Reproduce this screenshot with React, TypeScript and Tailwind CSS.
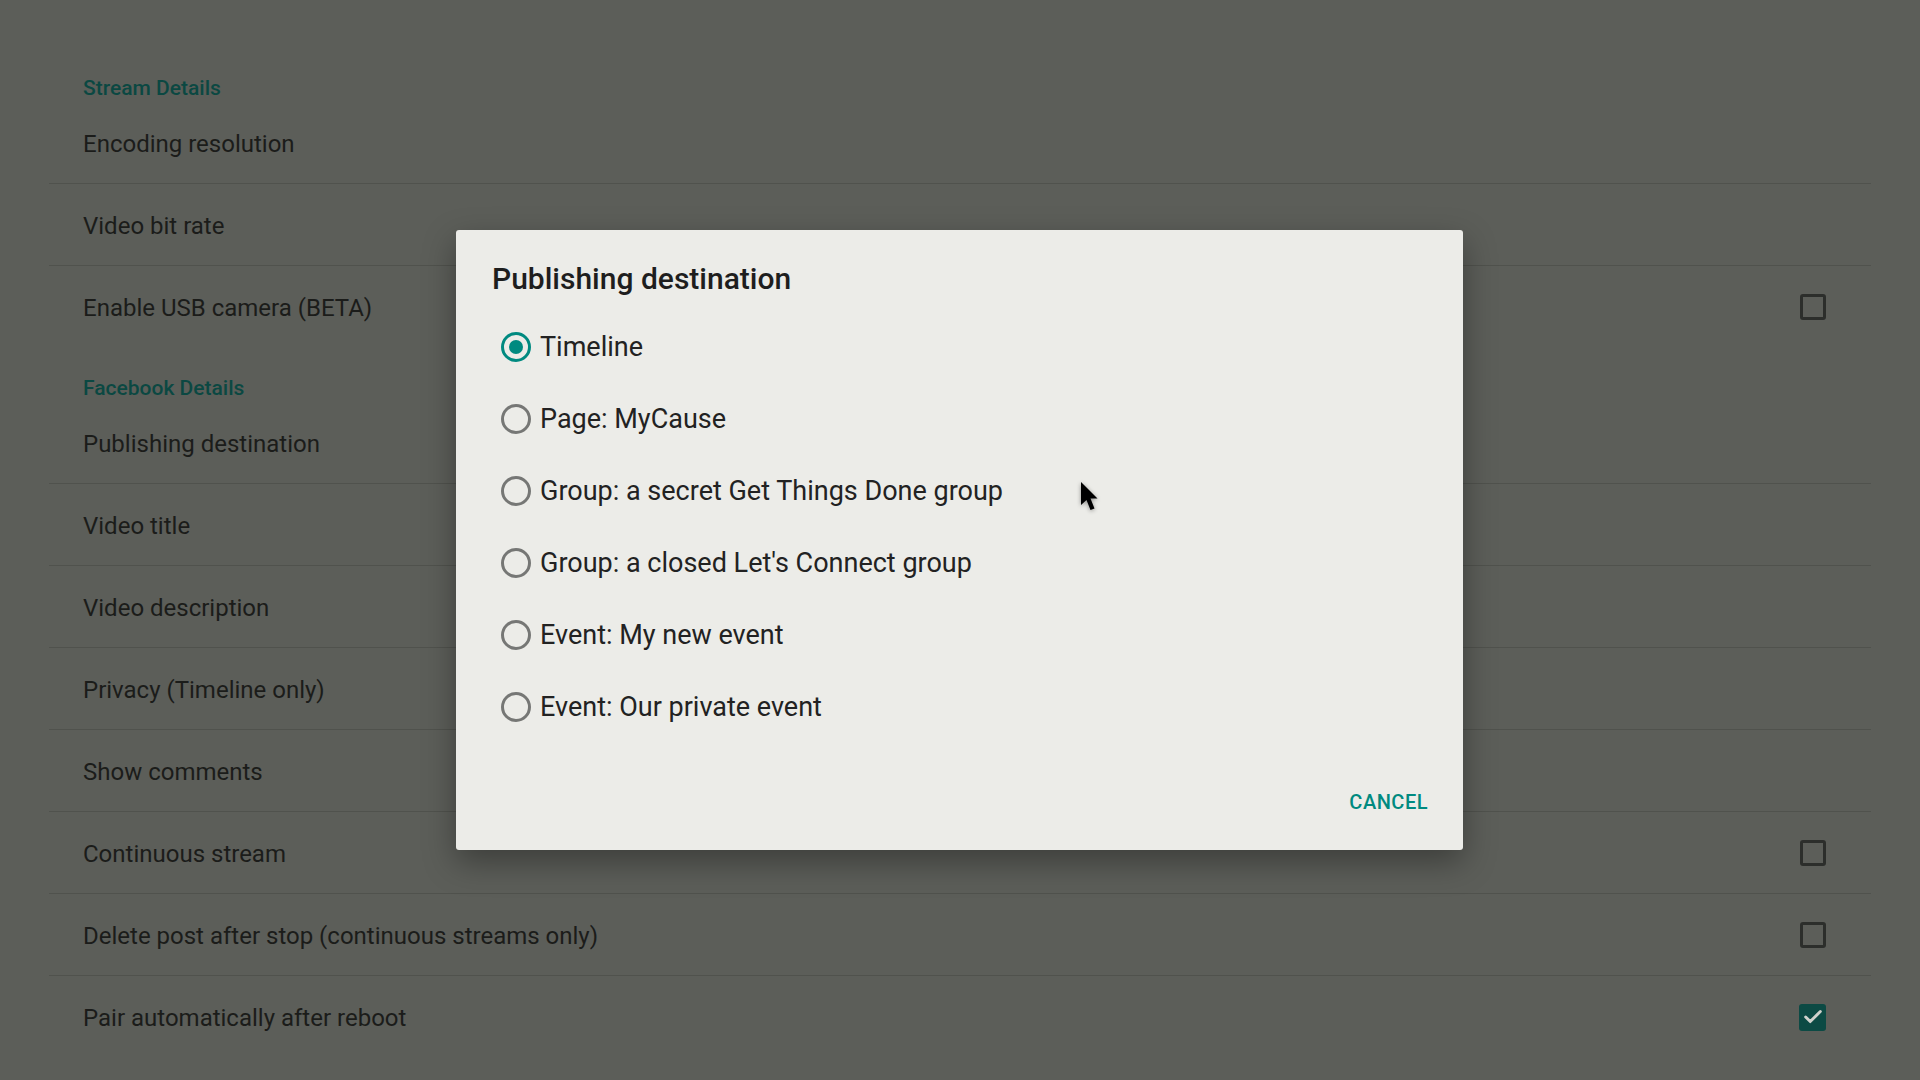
import { Check } from 'lucide-react';

type Row = { kind: 'header'; title: string } | { kind: 'item'; title: string; check?: boolean; checked?: boolean; divider?: boolean };

const rows: Row[] = [
  { kind: 'header', title: 'Stream Details' },
  { kind: 'item', title: 'Encoding resolution', divider: true },
  { kind: 'item', title: 'Video bit rate', divider: true },
  { kind: 'item', title: 'Enable USB camera (BETA)', check: true },
  { kind: 'header', title: 'Facebook Details' },
  { kind: 'item', title: 'Publishing destination', divider: true },
  { kind: 'item', title: 'Video title', divider: true },
  { kind: 'item', title: 'Video description', divider: true },
  { kind: 'item', title: 'Privacy (Timeline only)', divider: true },
  { kind: 'item', title: 'Show comments', divider: true },
  { kind: 'item', title: 'Continuous stream', check: true, divider: true },
  { kind: 'item', title: 'Delete post after stop (continuous streams only)', check: true, divider: true },
  { kind: 'item', title: 'Pair automatically after reboot', check: true, checked: true },
];

const destinations = [
  'Timeline',
  'Page: MyCause',
  'Group: a secret Get Things Done group',
  "Group: a closed Let's Connect group",
  'Event: My new event',
  'Event: Our private event',
];

function Checkbox({ checked }: { checked?: boolean }) {
  if (checked) {
    return (
      <div className="flex h-[27px] w-[27px] items-center justify-center rounded-[3px] bg-[#0c4a44]">
        <Check className="h-[22px] w-[22px] text-[#cfd1cc]" strokeWidth={3.2} />
      </div>
    );
  }
  return <div className="h-[26px] w-[26px] rounded-[3px] border-[3px] border-[#2c2e2b]" />;
}

function Radio({ selected }: { selected?: boolean }) {
  if (selected) {
    return (
      <div className="flex h-[30px] w-[30px] items-center justify-center rounded-full border-[3px] border-[#008a80]">
        <div className="h-[14px] w-[14px] rounded-full bg-[#008a80]" />
      </div>
    );
  }
  return <div className="h-[30px] w-[30px] rounded-full border-[3px] border-[#767775]" />;
}

export default function App() {
  return (
    <div className="relative h-[1080px] w-[1920px] overflow-hidden bg-[#5c5e59] font-['Roboto','Liberation_Sans',sans-serif]">
      <div className="px-[49px] pt-[48px]">
        {rows.map((row) =>
          row.kind === 'header' ? (
            <div key={row.title} className="h-[54px] pl-[34px] pt-[28px] text-[21px] leading-[24px] font-medium text-[#0b4842]">
              {row.title}
            </div>
          ) : (
            <div
              key={row.title}
              className={`flex h-[82px] items-center justify-between pl-[34px] pr-[45px] ${row.divider ? 'border-b border-[#50524d]' : ''}`}
            >
              <span className="pt-[2px] text-[24px] text-[#1b1c1a]">{row.title}</span>
              {row.check && <Checkbox checked={row.checked} />}
            </div>
          )
        )}
      </div>

      {/* Dialog */}
      <div className="absolute left-[456px] top-[230px] flex h-[620px] w-[1007px] flex-col rounded-[3px] bg-[#ecece8] shadow-[0_12px_32px_rgba(0,0,0,0.35)]">
        <h2 className="pl-[36px] pt-[31px] text-[30px] leading-[36px] font-medium text-[#1e1e1e]">Publishing destination</h2>
        <div className="mt-[14px] flex flex-col pl-[45px]">
          {destinations.map((d, i) => (
            <div key={d} className="flex h-[72px] items-center gap-[9px]">
              <Radio selected={i === 0} />
              <span className="text-[27px] text-[#222]">{d}</span>
            </div>
          ))}
        </div>
        <div className="mt-auto flex justify-end pb-[24px] pr-[35px]">
          <button className="flex h-[48px] items-center text-[20px] font-medium tracking-[0.5px] text-[#008a80]">CANCEL</button>
        </div>
      </div>

      {/* Mouse pointer */}
      <svg className="absolute left-[1080px] top-[481px] drop-shadow-[0_1px_2px_rgba(0,0,0,0.4)]" width="22" height="32" viewBox="0 0 22 32">
        <path d="M1 1 L1 24 L6.5 19 L10.5 29 L14.5 27.5 L10.5 17.5 L17.5 17.5 Z" fill="#000" />
      </svg>
    </div>
  );
}
